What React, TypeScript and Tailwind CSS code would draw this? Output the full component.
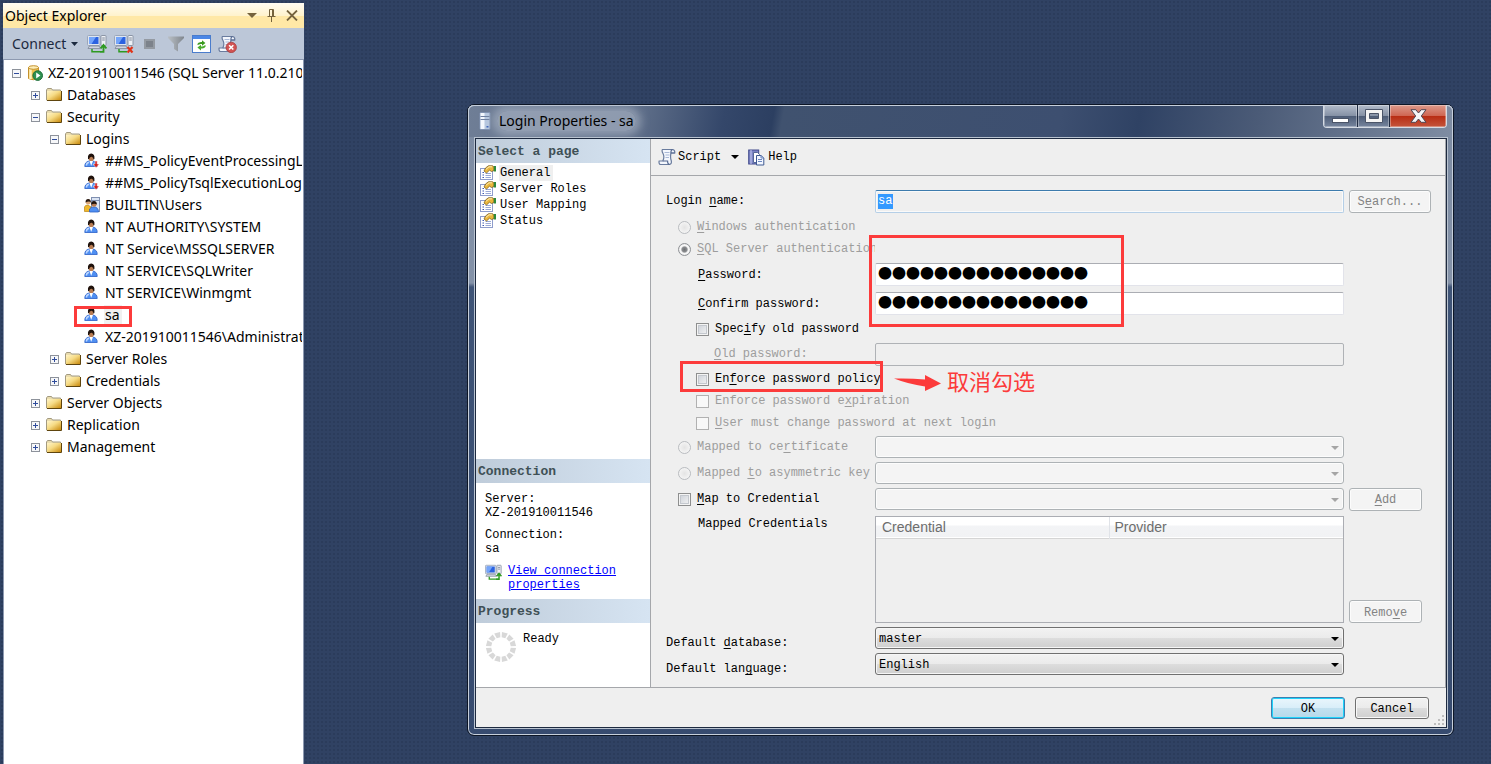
import { useState } from 'react';
import type { ReactNode } from 'react';
import clsx from 'clsx';

const MONO = "font-['Liberation_Mono','Noto_Sans_CJK_SC',monospace]";
const UI = "font-['Noto_Sans','Noto_Sans_CJK_SC',sans-serif]";

/* Text with its access key underlined: "&Name" underlines the N. */
function Acc({ text }: { text: string }) {
  const i = text.indexOf('&');
  if (i < 0) return <>{text}</>;
  return (
    <span>
      {text.slice(0, i)}
      <span className="underline decoration-1 underline-offset-2">{text[i + 1]}</span>
      {text.slice(i + 2)}
    </span>
  );
}

/* ---------- icons ---------- */

function FolderIcon() {
  return (
    <svg width="16" height="16" viewBox="0 0 16 16" className="shrink-0">
      <defs>
        <linearGradient id="fold" x1="0" y1="0" x2="1" y2="1">
          <stop offset="0" stopColor="#fff4c8" />
          <stop offset="0.45" stopColor="#f6db85" />
          <stop offset="1" stopColor="#c98a0c" />
        </linearGradient>
      </defs>
      <path d="M0.5 13V3Q0.5 2.5 1 2.5L1.5 1.5H5.5L6.5 3H14.5V13Z" fill="#e9dcae" stroke="#a39a80" />
      <path d="M1 4H15V13H1Z" fill="url(#fold)" />
      <path d="M1 13.5H15.5V4" fill="none" stroke="#5f450e" />
    </svg>
  );
}

function ServerDbIcon() {
  return (
    <svg width="16" height="16" viewBox="0 0 16 16" className="shrink-0">
      <path d="M1.5 2.5V13.5Q6 16 11.5 13.5V2.5Z" fill="#edbf4a" stroke="#c4912c" />
      <path d="M3.5 3.5V14" stroke="#fff1bd" strokeWidth="2.5" />
      <ellipse cx="6.5" cy="2.5" rx="5" ry="1.8" fill="#fdeeb8" stroke="#c4912c" />
      <circle cx="10.7" cy="10.6" r="4.8" fill="#2f9150" stroke="#1c6b38" />
      <path d="M9.2 7.6L13.4 10.6L9.2 13.6Z" fill="#fff" />
    </svg>
  );
}

function UserIcon({ disabled = false }: { disabled?: boolean }) {
  return (
    <svg width="16" height="16" viewBox="0 0 16 16" className="shrink-0">
      <path d="M0.8 13.5Q0.6 9 5 8H9Q13.4 9 13.2 13.5Z" fill="#4f8ff2" stroke="#2b60c8" strokeWidth="0.8" />
      <path d="M2.4 12.5Q2.4 9.8 5 9.2" stroke="#bcd6ff" strokeWidth="1.4" fill="none" />
      <path d="M5.4 8L7.2 12.8L9 8Z" fill="#fff" />
      <ellipse cx="7.2" cy="4.9" rx="2.5" ry="3.2" fill="#b97c52" />
      <path d="M4 6Q3.4 0.8 7.2 0.6Q11 0.8 10.4 6L9.4 6.5Q9.6 4.2 7.6 3.8Q5.4 3.6 5 6.3Z" fill="#1f120c" />
      {disabled && (
        <path d="M11 8H13.2V11H15.2L12.1 14.8L9 11H11Z" fill="#cf2222" stroke="#fff" strokeWidth="0.5" />
      )}
    </svg>
  );
}

function GroupIcon() {
  return (
    <svg width="16" height="16" viewBox="0 0 16 16" className="shrink-0">
      <rect x="7.5" y="0.5" width="8" height="14" fill="#dbe4f3" stroke="#7f8fb0" />
      <path d="M8 3.5H15" stroke="#7f8fb0" />
      <path d="M0.5 14.5V10Q1 8 4 8L7 10V14.5Z" fill="#f0b92c" stroke="#b98212" strokeWidth="0.7" />
      <circle cx="4.2" cy="5.2" r="2.4" fill="#d9a679" />
      <path d="M1.6 5.6Q1.2 2.2 4.2 2.1Q7 2.2 6.9 5.4Q5 3.6 1.6 5.6Z" fill="#2b1a12" />
      <path d="M5.5 15V12Q6.5 10 10 10Q14.3 10 14.5 15Z" fill="#4f8ff2" stroke="#2f63c4" strokeWidth="0.8" />
      <circle cx="10" cy="7.3" r="2.5" fill="#b97c52" />
      <path d="M7.2 7.8Q6.8 4.1 10 4Q13 4.1 12.8 7.6Q10.6 5.6 7.2 7.8Z" fill="#1f120c" />
    </svg>
  );
}

function ConnectIcon({ off = false, size = 20 }: { off?: boolean; size?: number }) {
  return (
    <svg width={size} height={size} viewBox="0 0 20 20" className="shrink-0">
      <rect x="0.5" y="1.5" width="12.5" height="10" rx="1" fill="#dfe6f0" stroke="#9aa6ba" />
      <rect x="2" y="3" width="9.5" height="7" fill="#2b62e0" />
      <path d="M2 3H9L4.5 10H2Z" fill="#74a5fa" />
      <path d="M1 14.5L2.5 12H12L13.5 14.5Z" fill="#cfd5df" stroke="#7d8798" strokeWidth="0.8" />
      <rect x="14" y="1.5" width="5" height="10" rx="0.6" fill="#eef1f6" stroke="#8b95a6" />
      <path d="M15.2 4H17.8M15.2 6H17.8" stroke="#7d8798" />
      <path d="M5 15V17.8H13" fill="none" stroke="#2e9a20" strokeWidth="1.5" />
      {off ? (
        <path d="M13.5 13L18.5 18.5M18.5 13L13.5 18.5" stroke="#e03418" strokeWidth="2.2" />
      ) : (
        <path d="M13 17.8H16.5V12M13.6 14.4L16.5 11L19.4 14.4" fill="none" stroke="#2e9a20" strokeWidth="1.8" />
      )}
    </svg>
  );
}

function FilterIcon() {
  return (
    <svg width="18" height="18" viewBox="0 0 18 18">
      <defs>
        <linearGradient id="funnel" x1="0" y1="0" x2="1" y2="0">
          <stop offset="0" stopColor="#b9bfc5" />
          <stop offset="1" stopColor="#80868d" />
        </linearGradient>
      </defs>
      <path d="M1 1.5H17V3L11 9V16.5L7 14V9L1 3Z" fill="url(#funnel)" />
    </svg>
  );
}

function RefreshIcon() {
  return (
    <svg width="19" height="18" viewBox="0 0 19 18">
      <rect x="0.5" y="0.5" width="18" height="17" fill="#fff" stroke="#4a7ccc" />
      <rect x="1" y="1" width="17" height="3" fill="#4c87e6" />
      <path d="M5 9.5Q6 7 9 7H10V5.2L13.4 8L10 10.8V9H9Q7.5 9 6.8 9.7Z" fill="#3a9a1e" />
      <path d="M14 10.5Q13 13.5 10 13.5H9V15.4L5.4 12.4L9 9.8V11.5H10Q11.5 11.5 12.2 10.6Z" fill="#4aae2c" />
    </svg>
  );
}

function ScrollIcon({ error = false }: { error?: boolean }) {
  return (
    <svg width="19" height="18" viewBox="0 0 19 18" className="shrink-0">
      <path
        d="M4.5 1.5H14.5Q17 1.7 16.8 5H13Q12 9 13.2 12.5Q14 16 11.5 16.5H2Q0.5 15 1.2 13H4.8Q6.8 9 5 5.5Q3.4 2.5 4.5 1.5Z"
        fill="#f4f7fd"
        stroke="#6a7c9e"
        strokeWidth="1.2"
      />
      <path d="M14.5 1.5Q12.6 2 13 5H16.8M4.8 13H9.6Q9.4 16 11.5 16.5" fill="none" stroke="#54688f" strokeWidth="1.1" />
      <path d="M6.5 4.5H11.5M7.5 7H11.5M7.5 9.5H11" stroke="#a9b8d6" />
      {error && (
        <>
          <circle cx="13.2" cy="12.4" r="5.2" fill="#d25353" stroke="#a83a3a" strokeWidth="0.8" />
          <path d="M11.1 10.3L15.3 14.5M15.3 10.3L11.1 14.5" stroke="#fff" strokeWidth="1.6" />
        </>
      )}
    </svg>
  );
}

function HelpIcon() {
  return (
    <svg width="17" height="17" viewBox="0 0 17 17" className="shrink-0">
      <rect x="0.7" y="1" width="10" height="14" fill="#7b83c4" stroke="#434b8c" />
      <path d="M3 1V15" stroke="#c6caf0" />
      <path d="M5.5 3.5H9.5L11.5 5.5V13.5H5.5Z" fill="#fff" stroke="#566896" />
      <path d="M8.5 6.5H13L15.8 9V16H8.5Z" fill="#f2f6ff" stroke="#3f5a92" />
      <path d="M13 6.5V9H15.8M10 10.5H14M10 12.5H14" fill="none" stroke="#6b87c0" />
    </svg>
  );
}

function PageIcon() {
  return (
    <svg width="16" height="16" viewBox="0 0 16 16" className="shrink-0">
      <rect x="0.5" y="3.5" width="12" height="11" fill="#fff" stroke="#8f9dcc" />
      <path d="M2.5 7.5H4M2.5 10H4M2.5 12.5H4" stroke="#3e58b0" />
      <path d="M5.5 8.5H11M5.5 10.5H11M5.5 12.5H11" stroke="#9aa9d6" />
      <path d="M4 6L5.5 3L8.5 0.7H12.5L14 2V5.5L11.5 6.5L9.5 5.2L6.5 8Z" fill="#eab63c" stroke="#6e5316" strokeWidth="0.7" />
      <path d="M5.8 4.5L9 1.8H12" stroke="#fff0b8" fill="none" />
      <path d="M13.8 1H16V6.5H13.8Z" fill="#2e8a3a" />
    </svg>
  );
}

function TowerIcon() {
  return (
    <svg width="12" height="18" viewBox="0 0 12 18" className="shrink-0">
      <rect x="1" y="0.5" width="10" height="17" rx="1" fill="#b7c8e0" stroke="#8092b0" />
      <rect x="1.5" y="1" width="4" height="16" fill="#f4f8fd" />
      <path d="M1.5 4.5H10.5M1.5 7.5H10.5" stroke="#6d7f9f" />
      <rect x="7.5" y="14" width="2" height="1.5" fill="#3e65b8" />
    </svg>
  );
}

function Spinner() {
  const ticks = Array.from({ length: 12 }, (_, i) => i * 30);
  return (
    <svg width="32" height="32" viewBox="0 0 32 32" className="shrink-0">
      {ticks.map((a) => (
        <path key={a} d="M13 1.2H19L17.9 6.4H14.1Z" fill="#d8d8d8" transform={`rotate(${a + 15} 16 16)`} />
      ))}
    </svg>
  );
}

function Caret({ className }: { className?: string }) {
  return (
    <svg width="8" height="4" viewBox="0 0 8 4" className={className}>
      <path d="M0 0H8L4 4Z" fill="currentColor" />
    </svg>
  );
}

/* ---------- object explorer ---------- */

type Node = { level: number; label: string; icon: ReactNode; open?: boolean; selected?: boolean };

const nodes: Node[] = [
  { level: 0, label: 'XZ-201910011546 (SQL Server 11.0.2100 - sa)', icon: <ServerDbIcon />, open: true },
  { level: 1, label: 'Databases', icon: <FolderIcon />, open: false },
  { level: 1, label: 'Security', icon: <FolderIcon />, open: true },
  { level: 2, label: 'Logins', icon: <FolderIcon />, open: true },
  { level: 3, label: '##MS_PolicyEventProcessingLogin##', icon: <UserIcon disabled /> },
  { level: 3, label: '##MS_PolicyTsqlExecutionLogin##', icon: <UserIcon disabled /> },
  { level: 3, label: 'BUILTIN\\Users', icon: <GroupIcon /> },
  { level: 3, label: 'NT AUTHORITY\\SYSTEM', icon: <UserIcon /> },
  { level: 3, label: 'NT Service\\MSSQLSERVER', icon: <UserIcon /> },
  { level: 3, label: 'NT SERVICE\\SQLWriter', icon: <UserIcon /> },
  { level: 3, label: 'NT SERVICE\\Winmgmt', icon: <UserIcon /> },
  { level: 3, label: 'sa', icon: <UserIcon />, selected: true },
  { level: 3, label: 'XZ-201910011546\\Administrator', icon: <UserIcon /> },
  { level: 2, label: 'Server Roles', icon: <FolderIcon />, open: false },
  { level: 2, label: 'Credentials', icon: <FolderIcon />, open: false },
  { level: 1, label: 'Server Objects', icon: <FolderIcon />, open: false },
  { level: 1, label: 'Replication', icon: <FolderIcon />, open: false },
  { level: 1, label: 'Management', icon: <FolderIcon />, open: false },
];

const indents = ['pl-2', 'pl-[27px]', 'pl-[46px]', 'pl-[65px]'];

function TreeRow({ node }: { node: Node }) {
  return (
    <li className={clsx('relative flex h-[22px] items-center whitespace-nowrap', indents[node.level])}>
      {node.open === undefined ? (
        <span className="w-[9px] shrink-0" />
      ) : (
        <button aria-label={node.open ? 'Collapse' : 'Expand'} className="shrink-0">
          <svg width="9" height="9" viewBox="0 0 9 9" className="block">
            <rect x="0.5" y="0.5" width="8" height="8" fill="#f6f7f9" stroke="#8d929b" />
            <path d={node.open ? 'M2 4.5H7' : 'M2 4.5H7M4.5 2V7'} stroke="#2f4c9c" />
          </svg>
        </button>
      )}
      <span className="ml-[6px] mr-1">{node.icon}</span>
      <span className={clsx('px-px', node.selected && 'bg-[#f0f0f0] pr-[2px]')}>{node.label}</span>
      {node.selected && (
        <span className="pointer-events-none absolute left-[70px] top-[2px] h-[21px] w-[58px] border-3 border-[#fc3b3b]" />
      )}
    </li>
  );
}

function ObjectExplorer() {
  return (
    <aside className={clsx('flex w-[301px] shrink-0 flex-col overflow-hidden text-sm text-black', UI)}>
      <header className="flex h-[25px] items-center bg-[linear-gradient(#fffcf2,#fff3cd_50%,#ffe8a6_51%,#ffe8a6)] pl-[2px] pr-[6px]">
        <h2 className="flex-1">Object Explorer</h2>
        <div className="flex items-center gap-[10px] text-[#75633d]">
          <button aria-label="Window position">
            <svg width="10" height="5" viewBox="0 0 10 5"><path d="M0 0H10L5 5Z" fill="currentColor" /></svg>
          </button>
          <button aria-label="Auto hide">
            <svg width="9" height="13" viewBox="0 0 9 13" fill="none" stroke="currentColor">
              <path d="M2.5 7V0.5H6.5V7M5.5 1V7M0.5 7.5H8.5M4.5 8V13" />
            </svg>
          </button>
          <button aria-label="Close">
            <svg width="12" height="11" viewBox="0 0 12 11" stroke="currentColor" strokeWidth="1.8">
              <path d="M1 0.5L11 10.5M11 0.5L1 10.5" />
            </svg>
          </button>
        </div>
      </header>
      <div className="flex h-8 items-center border-b border-[#8d99b0] bg-[#bcc7d8] pl-[9px] text-[#1b293e]">
        <button className="flex items-center gap-[5px]">
          Connect
          <svg width="7" height="4" viewBox="0 0 7 4"><path d="M0 0H7L3.5 4Z" fill="currentColor" /></svg>
        </button>
        <div className="ml-[9px] flex items-center gap-[7px]">
          <button aria-label="Connect"><ConnectIcon /></button>
          <button aria-label="Disconnect"><ConnectIcon off /></button>
          <button aria-label="Stop" className="mx-[3px]">
            <svg width="11" height="10" viewBox="0 0 11 10"><rect width="11" height="10" fill="#949aa2" /><rect x="2" y="2" width="7" height="6" fill="#7c828b" /></svg>
          </button>
          <button aria-label="Filter" className="ml-[2px]"><FilterIcon /></button>
          <button aria-label="Refresh"><RefreshIcon /></button>
          <button aria-label="Error log"><ScrollIcon error /></button>
        </div>
      </div>
      <div className="flex-1 border-x border-[#8d99b0] bg-white pt-[2px] pr-px">
        <ul className="overflow-hidden">
          {nodes.map((n) => (
            <TreeRow key={n.label} node={n} />
          ))}
        </ul>
      </div>
    </aside>
  );
}

/* ---------- dialog parts ---------- */

const radioCls =
  'size-[13px] shrink-0 appearance-none rounded-full border border-[#b9bcc0] bg-[radial-gradient(#e4e4e4,#fafafa)] checked:border-[#8f9296] checked:bg-[radial-gradient(#6f7174_0,#8a8c8f_32%,#f4f4f4_48%,#fafafa_56%,#c4c6c8)]';
const checkCls =
  'size-[13px] shrink-0 appearance-none border border-[#8e8f8f] bg-[linear-gradient(135deg,#c9ced6,#f6f6f6)] shadow-[inset_0_0_0_1px_#f4f4f4,inset_0_0_0_2px_#c4c8ce] disabled:border-[#b1b1b1] disabled:bg-none disabled:bg-[#f8f8f8] disabled:shadow-none';
const boxBase = 'h-[23px] w-full rounded-[2px] border px-[2px] outline-none';
const boxDisabled = 'border-[#afb2b6] bg-[#efefef]';
const optCls = 'flex items-center gap-[6px]';
const dim = 'text-[#9d9d9d]';

function Row({
  h,
  label,
  children,
  side,
  align = 'items-center',
}: {
  h: string;
  label: ReactNode;
  children?: ReactNode;
  side?: ReactNode;
  align?: string;
}) {
  return (
    <div className={clsx('flex', h)}>
      <div className={clsx('flex w-[209px] shrink-0 whitespace-nowrap', align)}>{label}</div>
      <div className="flex min-w-0 flex-1 items-center">{children}</div>
      <div className="ml-[5px] flex w-[82px] shrink-0 items-center">{side}</div>
    </div>
  );
}

function FlatButton({ text, wide = false }: { text: string; wide?: boolean }) {
  return (
    <button
      type="button"
      disabled
      className={clsx(
        'h-[23px] rounded-[3px] border border-[#adb2b5] bg-[#f4f4f4] pt-[2px] text-[#838383] shadow-[inset_0_0_0_1px_#fcfcfc]',
        wide ? 'w-[82px]' : 'w-[73px]',
      )}
    >
      <Acc text={text} />
    </button>
  );
}

function Combo({ id, label, value, disabled = false }: { id: string; label?: string; value?: string; disabled?: boolean }) {
  return (
    <div className="relative w-full">
      <select
        id={id}
        aria-label={label}
        disabled={disabled}
        className={clsx(
          'block h-[22px] w-full appearance-none rounded-[3px] border px-[3px] pt-[2px] outline-none',
          disabled
            ? 'border-[#adb2b5] bg-[#f4f4f4] opacity-100 shadow-[inset_0_0_0_1px_#fcfcfc]'
            : 'border-[#707070] bg-[linear-gradient(#f2f2f2,#ebebeb_48%,#dddddd_50%,#cfcfcf)] text-black shadow-[inset_0_0_0_1px_#f6f6f6]',
        )}
      >
        {value && <option>{value}</option>}
      </select>
      <Caret className={clsx('pointer-events-none absolute right-[5px] top-[10px]', disabled ? 'text-[#a5a5a5]' : 'text-black')} />
    </div>
  );
}

function SideHeader({ children }: { children: ReactNode }) {
  return (
    <h3 className="flex h-6 items-center bg-[linear-gradient(90deg,#bfccda,#d6e4f2)] pl-[2px] pt-px text-[13px] font-bold text-[#3f5056]">
      {children}
    </h3>
  );
}

function Sidebar() {
  const pages = ['General', 'Server Roles', 'User Mapping', 'Status'];
  return (
    <nav className="flex w-[175px] shrink-0 flex-col border-r border-[#a5a7ab] bg-white">
      <SideHeader>Select a page</SideHeader>
      <ul className="flex-1 pt-[2px]">
        {pages.map((p, i) => (
          <li key={p} className="flex h-4 items-center pl-1">
            <PageIcon />
            <a href="#" className={clsx('ml-[3px] px-px', i === 0 && 'bg-[#efefef] pr-[3px]')}>
              {p}
            </a>
          </li>
        ))}
      </ul>
      <SideHeader>Connection</SideHeader>
      <div className="h-[116px] pl-[9px] pt-[9px] leading-[14px]">
        <p>Server:</p>
        <p>XZ-201910011546</p>
        <p className="mt-2">Connection:</p>
        <p>sa</p>
        <div className="mt-2 flex items-start">
          <ConnectIcon size={17} />
          <a href="#" className="ml-[6px] w-[120px] text-[#0000ff] underline">
            View connection properties
          </a>
        </div>
      </div>
      <SideHeader>Progress</SideHeader>
      <div className="flex h-16 items-start pl-[9px] pt-2">
        <Spinner />
        <span className="ml-[6px]">Ready</span>
      </div>
    </nav>
  );
}

function GeneralForm() {
  const dots = '●'.repeat(15);
  const [pw, setPw] = useState(dots);
  const [pw2, setPw2] = useState(dots);
  const pwCls = clsx(
    boxBase,
    "border-[#e2e3ea] border-t-[#abadb3] bg-white pb-[6px] font-['Noto_Sans_CJK_SC',sans-serif] text-sm leading-4 text-black",
  );
  return (
    <form className="relative pb-[10px] pl-[15px] pr-[14px] pt-3">
      <Row h="h-[26px]" label={<label htmlFor="login"><Acc text="Login &name:" /></label>} side={<FlatButton text="S&earch..." wide />}>
        <div className="flex h-[23px] w-full items-center rounded-[2px] border border-[#b5cfe7] border-t-[#3d7bad] bg-[#efefef] px-[2px] shadow-[inset_0_0_0_1px_#fafafa]">
          <input id="login" readOnly value="sa" className="h-[15px] w-[15px] bg-[#3399ff] text-white outline-none" />
        </div>
      </Row>
      <div className="h-[2px]" />
      <Row h="h-[22px]" label={<label className={clsx(optCls, dim, 'pl-3')}><input type="radio" name="auth" disabled className={radioCls} /><Acc text="&Windows authentication" /></label>} />
      <Row h="h-[22px]" label={<label className={clsx(optCls, dim, 'overflow-hidden pl-3')}><input type="radio" name="auth" disabled defaultChecked className={radioCls} /><Acc text="&SQL Server authentication" /></label>} />
      <Row h="h-[29px]" label={<label htmlFor="pw" className="pl-8"><Acc text="&Password:" /></label>}>
        <input id="pw" type="text" value={pw} onChange={(e) => setPw(e.target.value)} className={pwCls} />
      </Row>
      <Row h="h-[29px]" label={<label htmlFor="pw2" className="pl-8"><Acc text="&Confirm password:" /></label>}>
        <input id="pw2" type="text" value={pw2} onChange={(e) => setPw2(e.target.value)} className={pwCls} />
      </Row>
      <Row h="h-[22px]" label={<label className={clsx(optCls, 'pl-[30px]')}><input type="checkbox" className={checkCls} /><Acc text="Spec&ify old password" /></label>} />
      <Row h="h-[28px]" label={<label htmlFor="old" className={clsx(dim, 'pl-12')}><Acc text="&Old password:" /></label>}>
        <input id="old" disabled className={clsx(boxBase, boxDisabled)} />
      </Row>
      <Row h="h-[22px]" label={<label className={clsx(optCls, 'pl-[30px]')}><input type="checkbox" className={checkCls} /><Acc text="En&force password policy" /></label>} />
      <Row h="h-[22px]" label={<label className={clsx(optCls, dim, 'pl-[30px]')}><input type="checkbox" disabled className={checkCls} /><Acc text="Enforce password e&xpiration" /></label>} />
      <Row h="h-[22px]" label={<label className={clsx(optCls, dim, 'pl-[30px]')}><input type="checkbox" disabled className={checkCls} /><Acc text="&User must change password at next login" /></label>} />
      <Row h="h-[26px]" label={<label className={clsx(optCls, dim, 'pl-3')}><input type="radio" name="auth" disabled className={radioCls} /><Acc text="Mapped to ce&rtificate" /></label>}>
        <Combo id="cert" label="Certificate" disabled />
      </Row>
      <Row h="h-[26px]" label={<label className={clsx(optCls, dim, 'pl-3')}><input type="radio" name="auth" disabled className={radioCls} /><Acc text="Mapped &to asymmetric key" /></label>}>
        <Combo id="key" label="Asymmetric key" disabled />
      </Row>
      <Row h="h-[26px]" label={<label className={clsx(optCls, 'pl-3')}><input type="checkbox" className={checkCls} /><Acc text="&Map to Credential" /></label>} side={<FlatButton text="&Add" />}>
        <Combo id="cred" label="Credential" disabled />
      </Row>
      <div className="flex pb-[2px] pt-1">
        <span className="w-[209px] shrink-0 pl-8">Mapped Credentials</span>
        <div className="h-[107px] min-w-0 flex-1 border border-[#abadb3] bg-[#efefef]">
          <table className="w-full table-fixed border-collapse font-['Liberation_Sans',Arial,sans-serif] text-sm text-[#6d6d6d]">
            <thead>
              <tr className="h-[21px] border-b border-[#d5d5d5] bg-[linear-gradient(#ffffff_40%,#f3f4f6_45%,#f1f2f4)]">
                <th className="w-[233px] border-r border-[#e0e3e8] pl-[6px] text-left font-normal leading-5">Credential</th>
                <th className="pl-[5px] text-left font-normal leading-5">Provider</th>
              </tr>
            </thead>
          </table>
        </div>
        <div className="ml-[5px] flex w-[82px] shrink-0 items-end">
          <FlatButton text="Remo&ve" />
        </div>
      </div>
      <Row h="h-[26px]" align="items-end" label={<label htmlFor="db"><Acc text="Default &database:" /></label>}>
        <Combo id="db" value="master" />
      </Row>
      <Row h="h-[26px]" align="items-end" label={<label htmlFor="lang"><Acc text="Default lan&guage:" /></label>}>
        <Combo id="lang" value="English" />
      </Row>

      {/* annotations drawn over the form */}
      <div className="pointer-events-none absolute left-[218px] top-[59px] h-[92px] w-[255px] border-3 border-[#fc3b3b]" />
      <div className="pointer-events-none absolute left-[29px] top-[185px] h-[31px] w-[203px] border-3 border-[#fc3b3b]" />
      <div className="pointer-events-none absolute left-[243px] top-[192px] flex items-start gap-[5px] text-[#fc3b3b]">
        <svg width="48" height="18" viewBox="0 0 48 18" className="mt-[6px]">
          <path d="M0 4.5Q16 4 31 5.5V1L47 9.5L31 17V12.5Q14 10 0 4.5Z" fill="#fc3b3b" />
        </svg>
        <span className="font-['Noto_Sans_CJK_SC',sans-serif] text-[22px] leading-6">取消勾选</span>
      </div>
    </form>
  );
}

function CaptionButtons() {
  const glass = 'flex h-full items-center justify-center bg-[linear-gradient(#b3bcca,#8692a6_48%,#4d5c76_50%,#76859e)] shadow-[inset_0_0_0_1px_#ffffff55]';
  return (
    <div className="flex h-[23px] divide-x divide-[#1f2b42] overflow-hidden rounded-b-[4px] border border-t-0 border-[#d5dbe4]">
      <button aria-label="Minimize" className={clsx(glass, 'w-[34px]')}>
        <svg width="17" height="5" viewBox="0 0 17 5" className="mt-[9px]"><rect x="0.5" y="0.5" width="16" height="4" fill="#fff" stroke="#4a5468" /></svg>
      </button>
      <button aria-label="Maximize" className={clsx(glass, 'w-8')}>
        <svg width="18" height="14" viewBox="0 0 18 14">
          <path d="M0.5 0.5H17.5V13.5H0.5ZM4.5 4.5H13.5V9.5H4.5Z" fillRule="evenodd" fill="#f4f4f4" stroke="#4a5468" />
        </svg>
      </button>
      <button aria-label="Close" className="flex h-full w-14 items-center justify-center bg-[linear-gradient(#dd9a8b,#cf6753_48%,#b82c12_50%,#c4553c)] shadow-[inset_0_0_0_1px_#ffffff55]">
        <svg width="17" height="14" viewBox="0 0 17 14">
          <path d="M1 0.7H5.8L8.5 4L11.2 0.7H16L11.3 7L16 13.3H11.2L8.5 10L5.8 13.3H1L5.7 7Z" fill="#f6f6f6" stroke="#4f4652" />
        </svg>
      </button>
    </div>
  );
}

function ResizeGrip() {
  const cells = [[8, 0], [4, 4], [8, 4], [0, 8], [4, 8], [8, 8]];
  return (
    <svg width="10" height="10" viewBox="0 0 10 10" className="absolute bottom-[2px] right-[2px]">
      {cells.map(([x, y]) => (
        <rect key={`${x}-${y}`} x={x} y={y} width="2" height="2" fill="#bdbdbd" />
      ))}
    </svg>
  );
}

function LoginDialog() {
  return (
    <section className="rounded-[7px] border border-[#0d1626] bg-[linear-gradient(#7b8aa1,#8492a8_178px,#3f5477_182px,#374b6f)] pb-[6px] pl-[6px] pr-[5px] shadow-[inset_0_0_0_1px_#c6cfdb]">
      <header className="-ml-[6px] -mr-[5px] flex h-8 items-start overflow-hidden rounded-t-[6px] bg-[linear-gradient(100deg,#6f7e96,#5c6c87_18%,#34476a_26%,#2c3f61_31%,#40526f_32%,#3d4f70_60%,#2f4264_68%,#4b5b77_80%,#7f8da3)] pl-[11px] pr-[6px] shadow-[inset_0_1px_0_#c6cfdb,inset_1px_0_0_#c6cfdb,inset_-1px_0_0_#c6cfdb]">
        <div className="mt-[6px] flex items-center">
          <TowerIcon />
          <h1 className={clsx('ml-[6px] rounded-full bg-[#a7b1c1aa] px-[2px] text-sm leading-5 text-black shadow-[0_0_8px_5px_#a7b1c1aa]', UI)}>
            Login Properties - sa
          </h1>
        </div>
        <div className="ml-auto">
          <CaptionButtons />
        </div>
      </header>
      <div className="border border-[#b9c3d0]">
        <div className={clsx('border border-[#1d2a40] bg-[#efefef] text-xs text-black', MONO)}>
          <div className="flex border-b border-r border-[#a5a7ab]">
            <Sidebar />
            <div className="min-w-0 flex-1">
              <div className="flex h-[37px] items-center border-b border-[#a5a7ab] pl-[7px]">
                <button className="flex items-center gap-[1px]">
                  <ScrollIcon />
                  Script
                </button>
                <button aria-label="Script options" className="ml-[10px]">
                  <Caret />
                </button>
                <button className="ml-[9px] flex items-center gap-[3px]">
                  <HelpIcon />
                  Help
                </button>
              </div>
              <GeneralForm />
            </div>
          </div>
          <footer className="relative flex h-[39px] items-center justify-end gap-[10px] pr-[17px]">
            <button className="h-[22px] w-[74px] rounded-[3px] border border-[#3c7fb1] bg-[linear-gradient(#eaf6fc,#d9eef9_48%,#c3e1f0_50%,#b5d9ea)] pt-[2px] shadow-[inset_0_0_0_1px_#1fd3fb]">
              OK
            </button>
            <button className="h-[22px] w-[74px] rounded-[3px] border border-[#707070] bg-[linear-gradient(#f2f2f2,#ebebeb_48%,#dddddd_50%,#cfcfcf)] pt-[2px] shadow-[inset_0_0_0_1px_#f8f8f8]">
              Cancel
            </button>
            <ResizeGrip />
          </footer>
        </div>
      </div>
    </section>
  );
}

export default function App() {
  return (
    <div className="flex min-h-screen bg-[#304263] bg-[radial-gradient(#2b3c5b_25%,transparent_26%)] bg-[length:4px_4px] pl-[3px]">
      <div className="flex pt-[3px]">
        <ObjectExplorer />
      </div>
      <main className="min-w-0 flex-1 pb-7 pl-[163px] pr-[37px] pt-[104px]">
        <LoginDialog />
      </main>
    </div>
  );
}
